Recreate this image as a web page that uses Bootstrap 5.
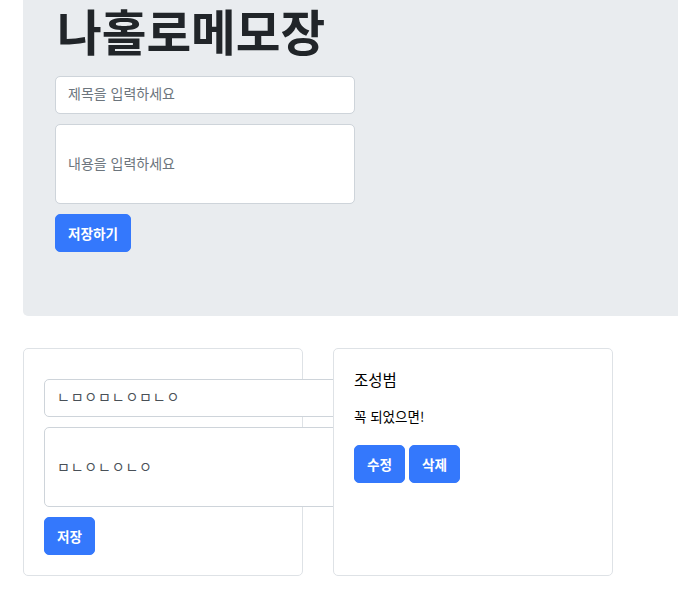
<!DOCTYPE html>
<html lang="ko">
<head>
<meta charset="utf-8">
<title>나홀로메모장</title>
<link href="https://cdn.jsdelivr.net/npm/bootstrap@5.3.0/dist/css/bootstrap.min.css" rel="stylesheet">
<style>
body { font-family: "Noto Sans CJK KR", "Liberation Sans", sans-serif; color: #212529; background: #fff; overflow-x: hidden; }
.page-wrap { padding-left: 23px; }
.hero-box { background: #e9ecef; border-radius: 0 0 0 5px; padding: 0 32px 64px; margin-bottom: 32px; }
.hero-title { font-size: 48.6px; font-weight: 700; line-height: 60px; height: 66px; margin: 0 0 0 2px; }
.memo-input.form-control { width: 300px; height: 38px; margin: 10px 0; font-size: 14px; padding: 3px 12px 7px; border-radius: 5px; border-color: #ced4da; }
.memo-area.form-control { width: 300px; height: 80px; margin: 10px 0; font-size: 14px; padding: 28px 12px 6px; border-radius: 5px; border-color: #ced4da; resize: none; line-height: 20px; }
.memo-input::placeholder, .memo-area::placeholder { color: #6c757d; }
.memo-value.form-control { color: #495057; letter-spacing: 0.8px; }
.save-btn.btn { height: 38px; padding: 0 12px; font-size: 13.6px; font-weight: 700; border-radius: 5px; background: #3478fc; border-color: #3478fc; color: #fff; line-height: 34px; white-space: nowrap; }
.memo-row { gap: 30px; }
.memo-card.card { width: 280px; height: 228px; border-color: #dee2e6; border-radius: 5px; }
.memo-card .card-body { padding: 20px; }
.memo-name { font-size: 15.5px; font-weight: 400; line-height: 20px; margin: 0 0 17px; color: #000; }
.memo-text { font-size: 13.5px; line-height: 20px; margin: 0 0 19px; color: #000; }
.btn-pair { gap: 4px; }
</style>
</head>
<body>
<div class="page-wrap">
  <section class="hero-box">
    <h1 class="hero-title">나홀로메모장</h1>
    <input class="form-control memo-input" type="text" placeholder="제목을 입력하세요">
    <textarea class="form-control memo-area" placeholder="내용을 입력하세요"></textarea>
    <button class="btn btn-primary save-btn" type="button">저장하기</button>
  </section>
  <div class="d-flex memo-row">
    <div class="card memo-card">
      <div class="card-body">
        <input class="form-control memo-input memo-value" type="text" value="ㄴㅁㅇㅁㄴㅇㅁㄴㅇ">
        <textarea class="form-control memo-area memo-value">ㅁㄴㅇㄴㅇㄴㅇ</textarea>
        <button class="btn btn-primary save-btn" type="button">저장</button>
      </div>
    </div>
    <div class="card memo-card">
      <div class="card-body">
        <h5 class="memo-name">조성범</h5>
        <p class="memo-text">꼭 되었으면!</p>
        <div class="d-flex btn-pair">
          <button class="btn btn-primary save-btn" type="button">수정</button>
          <button class="btn btn-primary save-btn" type="button">삭제</button>
        </div>
      </div>
    </div>
  </div>
</div>
<script src="https://cdn.jsdelivr.net/npm/bootstrap@5.3.0/dist/js/bootstrap.bundle.min.js"></script>
</body>
</html>
